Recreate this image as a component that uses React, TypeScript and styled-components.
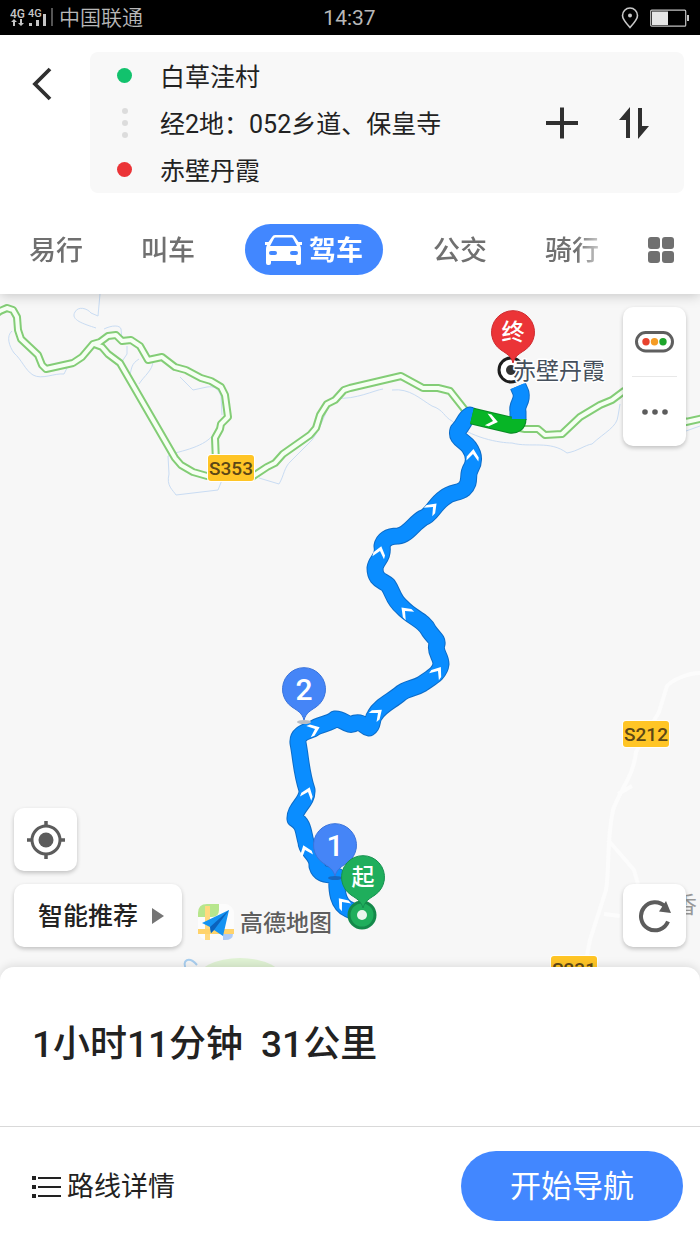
import React from 'react';
import styled, { createGlobalStyle } from 'styled-components';

const GlobalStyle = createGlobalStyle`
  *, *::before, *::after { box-sizing: border-box; }
  body {
    margin: 0;
    background: #fff;
    color: #222;
    font-family: Roboto, "Noto Sans CJK SC", sans-serif;
  }
  button {
    margin: 0;
    padding: 0;
    border: 0;
    background: none;
    color: inherit;
    font: inherit;
    cursor: pointer;
  }
  svg { display: block; }
`;

const Page = styled.div`
  display: flex;
  flex-direction: column;
  min-height: 100vh;
`;

const StatusBar = styled.div`
  display: grid;
  grid-template-columns: 1fr auto 1fr;
  align-items: center;
  height: 35px;
  padding: 0 11px 0 10px;
  background: #000;
  color: #b8b8b8;
  font-size: 21px;
  line-height: 35px;
`;

const StatusGroup = styled.div<{ $end?: boolean }>`
  display: flex;
  align-items: center;
  justify-content: ${(p) => (p.$end ? 'flex-end' : 'flex-start')};
  gap: ${(p) => (p.$end ? 11 : 6)}px;
`;

const Carrier = styled.span`
  padding-top: 1px;
  font-weight: 350;
`;

const Clock = styled.time`
  padding-top: 1px;
`;

const Header = styled.header`
  position: relative;
  z-index: 2;
  background: #fff;
  box-shadow: 0 1px 12px rgba(0, 0, 0, 0.22);
`;

const RouteBar = styled.div`
  display: flex;
  align-items: flex-start;
  padding: 17px 16px 0 0;
`;

const BackButton = styled.button`
  display: flex;
  justify-content: center;
  width: 90px;
  padding: 15px 6px 0 0;
`;

const RouteBox = styled.div`
  display: flex;
  flex: 1;
  align-items: center;
  padding: 0 34px 0 24px;
  border-radius: 8px;
  background: #f8f8f8;
`;

const StopList = styled.div`
  flex: 1;
`;

const Stop = styled.button`
  display: flex;
  align-items: center;
  gap: 25px;
  width: 100%;
  height: 47px;
  font-size: 25px;
  line-height: 43px;
  text-align: left;
`;

const StopDot = styled.span<{ $color: string }>`
  width: 15px;
  height: 15px;
  margin: 0 3px;
  border-radius: 50%;
  background: ${(p) => p.$color};
`;

const ViaDots = styled.span`
  display: flex;
  flex-direction: column;
  align-items: center;
  gap: 6px;
  width: 21px;

  i {
    width: 6px;
    height: 6px;
    border-radius: 50%;
    background: #dcdcdc;
  }
`;

const StopName = styled.span`
  flex: 1;
  padding-top: 4px;
`;

const RouteActions = styled.div`
  display: flex;
  gap: 40px;
`;

const TabRow = styled.nav`
  display: flex;
  align-items: center;
  height: 101px;
  padding: 12px 26px 0 0;
`;

const Tabs = styled.div`
  display: flex;
  flex: 1;
  align-items: center;
  justify-content: space-between;
  height: 51px;
  mask-image: linear-gradient(to right, #000 calc(100% - 52px), rgba(0, 0, 0, 0.35) calc(100% - 28px));
`;

const Tab = styled.button<{ $active?: boolean }>`
  display: flex;
  align-items: center;
  justify-content: center;
  gap: 7px;
  width: ${(p) => (p.$active ? 138 : 112)}px;
  height: 51px;
  margin: 0 ${(p) => (p.$active ? 21 : 0)}px;
  border-radius: 26px;
  background: ${(p) => (p.$active ? '#4287ff' : 'transparent')};
  color: ${(p) => (p.$active ? '#fff' : '#707070')};
  font-size: 27px;
  font-weight: ${(p) => (p.$active ? 700 : 500)};
  line-height: 47px;
`;

const TabLabel = styled.span`
  padding-top: 4px;
`;

const MoreModes = styled.button`
  margin-left: 20px;
`;

const MapArea = styled.main`
  position: relative;
  display: flex;
  flex: 1;
  justify-content: space-between;
  min-height: 600px;
  padding: 13px 14px 34px;
  background: #f7f7f7;
`;

const MapCanvas = styled.svg`
  position: absolute;
  inset: 0;
  width: 100%;
  height: 100%;
`;

const ControlColumn = styled.div<{ $split?: boolean }>`
  position: relative;
  display: flex;
  flex-direction: column;
  justify-content: ${(p) => (p.$split ? 'space-between' : 'flex-end')};
  gap: 13px;
`;

const ControlRow = styled.div`
  display: flex;
  align-items: center;
  gap: 16px;
`;

const Card = styled.div`
  border-radius: 10px;
  background: #fff;
  box-shadow: 0 2px 4px rgba(0, 0, 0, 0.22);
`;

const LayerCard = styled(Card)`
  display: flex;
  flex-direction: column;
  width: 63px;
  padding: 0 9px;
`;

const LayerButton = styled.button`
  display: flex;
  align-items: center;
  justify-content: center;
  height: 69px;

  & + & {
    height: 70px;
    border-top: 1px solid #e8e8e8;
  }
`;

const SquareButton = styled(Card).attrs({ as: 'button' })`
  display: flex;
  align-items: center;
  justify-content: center;
  width: 63px;
  height: 63px;
  background: #fff;
`;

const StrategyButton = styled(Card).attrs({ as: 'button' })`
  display: flex;
  align-items: center;
  gap: 14px;
  height: 63px;
  padding: 0 18px 0 24px;
  background: #fff;
  font-size: 25px;
  font-weight: 500;
  line-height: 61px;
`;

const StrategyLabel = styled.span`
  padding-top: 2px;
`;

const Brand = styled.div`
  display: flex;
  align-items: center;
  gap: 6px;
  padding-top: 12px;
  color: #5e5e5e;
  font-size: 23px;
  font-weight: 500;
  line-height: 32px;
  text-shadow: 0 0 2px #fff;
`;

const BrandName = styled.span`
  padding-top: 4px;
`;

const Sheet = styled.section`
  position: relative;
  z-index: 1;
  margin-top: -14px;
  border-radius: 14px 14px 0 0;
  background: #fff;
  box-shadow: 0 -2px 8px rgba(0, 0, 0, 0.1);
`;

const Summary = styled.h1`
  display: flex;
  align-items: center;
  gap: 18px;
  height: 159px;
  margin: 0;
  padding: 0 32px 4px;
  font-size: 37px;
  font-weight: 500;
  line-height: 50px;
`;

const Footer = styled.footer`
  display: flex;
  align-items: center;
  justify-content: space-between;
  height: 118px;
  padding: 0 17px 0 32px;
  border-top: 1px solid #d9d9d9;
`;

const DetailButton = styled.button`
  display: flex;
  align-items: center;
  gap: 5px;
  padding-top: 2px;
  font-size: 27px;
  line-height: 40px;
`;

const StartButton = styled.button`
  width: 222px;
  height: 70px;
  padding-top: 2px;
  border-radius: 35px;
  background: #4287ff;
  color: #fff;
  font-size: 31px;
  line-height: 68px;
`;

const GREEN_ROADS = [
  'M-4 314 L0 311 L7 308 L13 310 L17 317 L18 330 L21 339 L38 355 L42 365 L46 369 L73 363 L82 357 L93 344 L100 342 L108 336 L116 335 L122 341 L131 340 L140 346 L148 360 L162 357 L175 367 L186 370 L201 378 L211 381 L221 387 L225 395 L228 417 L221 424 L220 429 L215 438 L216 462',
  'M94 344 L102 347 L108 354 L120 363 L175 458 L181 465 L193 472 L207 476 L252 477 L267 467 L275 463 L283 454 L310 435 L316 428 L320 415 L327 404 L335 400 L344 390 L350 388 L401 376 L423 388 L438 388 L450 391 L465 410 L500 424 L525 429 L538 429 L545 435 L562 434 L580 417 L600 405 L612 400 L624 391 L650 400 L686 422 L704 418',
];

const STREAMS = [
  'M12 331 C6 336 9 346 14 353 C22 360 25 370 33 375 C42 380 54 373 64 374 L68 366',
  'M100 294 L98 316 M96 328 C84 324 70 320 75 312 C78 306 87 308 91 313 L98 316 M104 329 C112 325 120 325 121 329 L122 340 M127 346 L127 354 L121 363',
  'M139 359 C131 364 132 368 130 374 M153 361 C153 370 144 376 139 384 M180 377 L193 390 L207 387 C214 386 218 388 221 396 L222 415 M218 425 C214 442 195 448 175 453 L168 456 L169 474 C166 486 173 490 176 495 L218 490 L222 480',
  'M259 478 L279 484 C284 476 284 467 291 461 L312 440 C324 424 326 404 337 398 C355 400 375 390 383 389 M392 390 C410 388 420 399 432 406 C444 410 444 417 452 421 C470 438 500 443 512 443 C530 448 550 440 567 453 C578 451 585 445 592 444 C605 432 617 427 618 416 L620 404 M686 431 L700 426',
];

const WHITE_ROADS =
  'M700 673 C688 673 672 680 667 686 L659 712 L636 752 C634 775 620 790 613 810 C606 845 610 865 606 890 L590 940 L584 970 M632 786 L618 794 M608 840 L622 856 L634 870 L638 884 M604 914 L620 916';

const ROUTE_NORTH = 'M518 386 L521 393 C523 402 516 404 518 412 L518 420';
const ROUTE_GREEN = 'M472 416 L493 421 L510 425 Q518 426 518 419';
const ROUTE_SOUTH =
  'M470 415 C464 418 464 425 458 430 C455 439 465 441 469 447 C474 454 475 461 471 468 C466 476 472 482 464 489 C458 494 452 491 444 498 C434 505 432 515 423 518 C414 523 408 535 398 536 C388 536 383 540 382 546 C384 558 376 560 375 568 C375 580 382 580 388 585 C393 592 393 600 402 607 C412 618 424 620 429 631 C434 638 438 640 437 644 C434 652 441 656 441 664 C440 674 430 678 422 684 C414 689 406 688 400 694 C390 702 380 706 375 715 C371 720 374 725 369 728 C364 727 363 721 355 723 C348 728 343 718 335 719 C330 724 319 724 313 729 C305 732 297 734 298 743 C301 758 301 772 307 790 C308 802 294 808 295 819 C304 824 303 832 306 842 C306 852 318 854 317 866 C320 876 328 874 337 876 C336 892 338 904 348 909 L361 915';

const ARROWS: Array<[number, number, number]> = [
  [493, 421, 103],
  [473, 454, 5],
  [433, 507, 45],
  [380, 551, 15],
  [405, 611, -45],
  [438, 671, 35],
  [378, 713, 50],
  [315, 729, 68],
  [308, 792, 20],
  [305, 850, -20],
  [342, 902, -40],
];

interface PinProps {
  x: number;
  y: number;
  color: string;
  edge: string;
  label: string;
  size: number;
}

function Pin({ x, y, color, edge, label, size }: PinProps) {
  return (
    <g transform={`translate(${x} ${y})`}>
      <path
        d="M0 31 C-2 24 -6 22 -12 18 A21.5 21.5 0 1 1 12 18 C6 22 2 24 0 31 Z"
        fill={color}
        stroke={edge}
        strokeWidth="1"
      />
      <text y={size * 0.35} fontSize={size} fontWeight="500" fill="#fff" textAnchor="middle">
        {label}
      </text>
    </g>
  );
}

function Shield({ x, y, label }: { x: number; y: number; label: string }) {
  return (
    <g transform={`translate(${x} ${y})`}>
      <rect x="-24" y="-14" width="48" height="28" rx="4" fill="#fff" />
      <rect x="-23" y="-13" width="46" height="26" rx="3" fill="#ffc526" />
      <text y="7" fontSize="19" fontWeight="500" fill="#5c4716" textAnchor="middle">
        {label}
      </text>
    </g>
  );
}

interface RouteLineProps {
  d: string;
  fill: string;
  edge: string;
  cap?: 'round' | 'butt';
}

function RouteLine({ d, fill, edge, cap = 'round' }: RouteLineProps) {
  return (
    <g fill="none" strokeLinecap={cap} strokeLinejoin="round">
      <path d={d} stroke={edge} strokeWidth="17" />
      <path d={d} stroke={fill} strokeWidth="15" />
    </g>
  );
}

function RouteMap() {
  return (
    <MapCanvas viewBox="0 294 700 687" preserveAspectRatio="xMidYMid slice" role="img" aria-label="路线地图">
      <path d={WHITE_ROADS} fill="none" stroke="#fcfcfc" strokeWidth="4" />
      <g fill="none" stroke="#c9dcf3" strokeWidth="1">
        {STREAMS.map((d) => (
          <path key={d} d={d} />
        ))}
      </g>
      <ellipse cx="240" cy="980" rx="44" ry="22" fill="#e0f2d4" />
      <path d="M187 972 C180 958 190 957 197 965" fill="none" stroke="#a9cff0" strokeWidth="2" />
      <g fill="none" strokeLinejoin="round">
        {GREEN_ROADS.map((d) => (
          <path key={d} d={d} stroke="#83cd76" strokeWidth="8" />
        ))}
        {GREEN_ROADS.map((d) => (
          <path key={d} d={d} stroke="#f6fff3" strokeWidth="4" />
        ))}
      </g>
      <Shield x={231} y={468} label="S353" />
      <Shield x={646} y={734} label="S212" />
      <Shield x={574} y={969} label="S231" />
      <text x="674" y="913" fontSize="23" fill="#999">
        香
      </text>

      <circle cx="511" cy="370" r="12" fill="#fff" stroke="#1c1c1c" strokeWidth="3" />
      <circle cx="511" cy="370" r="5" fill="#333" />
      <RouteLine d={ROUTE_NORTH} fill="#0a8dff" edge="#0c6cc8" cap="butt" />
      <RouteLine d={ROUTE_SOUTH} fill="#0a8dff" edge="#0c6cc8" />
      <RouteLine d={ROUTE_GREEN} fill="#07b526" edge="#0a8a25" cap="butt" />
      <g fill="#fff">
        {ARROWS.map(([x, y, angle]) => (
          <path
            key={`${x}-${y}`}
            transform={`translate(${x} ${y}) rotate(${angle})`}
            d="M0 -5 L6 3 L6 7 L0 0 L-6 7 L-6 3 Z"
          />
        ))}
      </g>
      <text
        x="513"
        y="379"
        fontSize="23"
        fill="#46505c"
        stroke="#fff"
        strokeWidth="3"
        strokeLinejoin="round"
        paintOrder="stroke"
      >
        赤壁丹霞
      </text>
      <Pin x={513} y={332} color="#eb3437" edge="#cf2c31" label="终" size={23} />

      <ellipse cx="304" cy="722" rx="7" ry="2" fill="#b9bec6" />
      <Pin x={304} y={689} color="#4585f7" edge="#3a74dc" label="2" size={30} />
      <ellipse cx="335" cy="878" rx="7" ry="2" fill="#1768c0" />
      <Pin x={335} y={845} color="#4585f7" edge="#3a74dc" label="1" size={30} />
      <circle cx="362" cy="915" r="13" fill="#1fae5c" stroke="#14894a" strokeWidth="3" />
      <circle cx="362" cy="915" r="5" fill="#e9f5ee" />
      <Pin x={363} y={877} color="#1fae5c" edge="#169150" label="起" size={23} />
    </MapCanvas>
  );
}

function SignalIcon() {
  return (
    <svg width="43" height="20" viewBox="0 0 43 20" fill="#c6c6c6" aria-hidden="true">
      <text x="0" y="10" fontSize="12" fontWeight="500">4G</text>
      <text x="18" y="9" fontSize="11" fontWeight="500">4G</text>
      <path d="M4 11 L7 14 H5 V18 H3 V14 H1 Z M11 18 L8 15 H10 V11 H12 V15 H14 Z" />
      <path d="M19 15h3v3h-3z M26 12h3v6h-3z M33 6h3v12h-3z" />
      <path d="M41 0h2v18h-2z" fill="#555" />
    </svg>
  );
}

function LocationIcon() {
  return (
    <svg width="18" height="22" viewBox="0 0 18 22" aria-hidden="true">
      <path
        d="M9 20.5 C5 16 1.5 12.5 1.5 8.5 A7.5 7.5 0 0 1 16.5 8.5 C16.5 12.5 13 16 9 20.5 Z"
        fill="none"
        stroke="#c8c8c8"
        strokeWidth="1.6"
      />
      <circle cx="9" cy="8.5" r="2" fill="#c8c8c8" />
    </svg>
  );
}

function BatteryIcon() {
  return (
    <svg width="39" height="18" viewBox="0 0 39 18" aria-hidden="true">
      <rect x="0.7" y="1.2" width="35" height="16" rx="1" fill="none" stroke="#c4c4c4" strokeWidth="1.2" />
      <rect x="2" y="2.5" width="16" height="13.5" fill="#e6e6e6" />
      <rect x="37" y="6" width="2" height="6" fill="#c4c4c4" />
    </svg>
  );
}

function CarIcon() {
  return (
    <svg width="37" height="30" viewBox="0 0 37 30" aria-hidden="true">
      <path
        fill="#fff"
        fillRule="evenodd"
        d="M10 0 H27 Q29 0 30 2 L33.5 7 H37 V10 H35 Q36 12 36 14 V28 Q36 30 34 30 H33 Q31 30 31 28 V26 H6 V28 Q6 30 4 30 H3 Q1 30 1 28 V14 Q1 12 2 10 H0 V7 H3.500 L7 2 Q8 0 10 0 Z M10.500 2.500 Q9.500 2.500 9 3.500 L5 11 H32 L28 3.500 Q27.500 2.500 26.500 2.500 Z"
      />
      <rect x="4" y="16" width="8" height="4" rx="2" fill="#4287ff" />
      <rect x="25" y="16" width="8" height="4" rx="2" fill="#4287ff" />
    </svg>
  );
}

function TrafficIcon() {
  return (
    <svg width="39" height="22" viewBox="0 0 39 22" aria-hidden="true">
      <rect x="1.5" y="1.5" width="36" height="18.5" rx="9.2" fill="#fff" stroke="#5f5f5f" strokeWidth="3" />
      <circle cx="11" cy="10.7" r="3.7" fill="#e8432e" />
      <circle cx="19.5" cy="10.7" r="3.7" fill="#f59b23" />
      <circle cx="28" cy="10.7" r="3.7" fill="#1ea52b" />
    </svg>
  );
}

function BrandIcon() {
  return (
    <svg width="36" height="36" viewBox="0 0 36 36" aria-hidden="true">
      <rect width="36" height="36" rx="9" fill="#fcfcfc" />
      <path d="M0 13 V9 Q0 0 9 0 H21 V6 Q21 13 14 13 Z" fill="#b7e68d" />
      <path d="M7 2 H12 V36 H7 Z" fill="#ffd97f" />
      <path d="M0 25 H36 V30 H0 Z" fill="#ffd36b" />
      <path d="M25 30 H35 Q35 36 27 36 H25 Z" fill="#aecbf7" />
      <path d="M31 6 L4 19 L12 23 L13 29 L16 26 L25 32 Z" fill="#1593f2" />
      <path d="M31 6 L12 23 L13 29 L16 26 Z" fill="#0b62bd" />
    </svg>
  );
}

export default function App() {
  return (
    <Page>
      <GlobalStyle />
      <StatusBar>
        <StatusGroup>
          <SignalIcon />
          <Carrier>中国联通</Carrier>
        </StatusGroup>
        <Clock>14:37</Clock>
        <StatusGroup $end>
          <LocationIcon />
          <BatteryIcon />
        </StatusGroup>
      </StatusBar>

      <Header>
        <RouteBar>
          <BackButton aria-label="返回">
            <svg width="20" height="34" viewBox="0 0 20 34" fill="none" stroke="#303030" strokeWidth="3.8">
              <path d="M18 2 L3 17 L18 32" />
            </svg>
          </BackButton>
          <RouteBox>
            <StopList>
              <Stop>
                <StopDot $color="#12c26d" />
                <StopName>白草洼村</StopName>
              </Stop>
              <Stop>
                <ViaDots>
                  <i />
                  <i />
                  <i />
                </ViaDots>
                <StopName>经2地：052乡道、保皇寺</StopName>
              </Stop>
              <Stop>
                <StopDot $color="#eb3437" />
                <StopName>赤壁丹霞</StopName>
              </Stop>
            </StopList>
            <RouteActions>
              <button aria-label="添加途经点">
                <svg width="32" height="32" viewBox="0 0 32 32" stroke="#303030" strokeWidth="4">
                  <path d="M16 0.5 V31.5 M0 16 H32" />
                </svg>
              </button>
              <button aria-label="交换起终点">
                <svg width="32" height="32" viewBox="0 0 32 32" fill="#303030">
                  <path d="M12 0 V31 H8 V13 H1 Z M20 1 H24 V19 H31 L20 32 Z" />
                </svg>
              </button>
            </RouteActions>
          </RouteBox>
        </RouteBar>
        <TabRow>
          <Tabs>
            <Tab>
              <TabLabel>易行</TabLabel>
            </Tab>
            <Tab>
              <TabLabel>叫车</TabLabel>
            </Tab>
            <Tab $active aria-current="page">
              <CarIcon />
              <TabLabel>驾车</TabLabel>
            </Tab>
            <Tab>
              <TabLabel>公交</TabLabel>
            </Tab>
            <Tab>
              <TabLabel>骑行</TabLabel>
            </Tab>
          </Tabs>
          <MoreModes aria-label="更多出行方式">
            <svg width="26" height="26" viewBox="0 0 26 26" fill="#707070">
              <rect width="12" height="12" rx="3" />
              <rect x="14" width="12" height="12" rx="3" />
              <rect y="14" width="12" height="12" rx="3" />
              <rect x="14" y="14" width="12" height="12" rx="3" />
            </svg>
          </MoreModes>
        </TabRow>
      </Header>

      <MapArea>
        <RouteMap />
        <ControlColumn>
          <SquareButton aria-label="定位">
            <svg width="40" height="40" viewBox="0 0 40 40" fill="none" stroke="#5c5c5c">
              <circle cx="20" cy="20" r="14" strokeWidth="3" />
              <circle cx="20" cy="20" r="7.5" fill="#5c5c5c" stroke="none" />
              <path d="M20 1 V7 M20 33 V39 M1 20 H7 M33 20 H39" strokeWidth="3.5" />
            </svg>
          </SquareButton>
          <ControlRow>
            <StrategyButton>
              <StrategyLabel>智能推荐</StrategyLabel>
              <svg width="12" height="16" viewBox="0 0 12 16" fill="#757575" aria-hidden="true">
                <path d="M0 0 L12 8 L0 16 Z" />
              </svg>
            </StrategyButton>
            <Brand>
              <BrandIcon />
              <BrandName>高德地图</BrandName>
            </Brand>
          </ControlRow>
        </ControlColumn>
        <ControlColumn $split>
          <LayerCard>
            <LayerButton aria-label="路况">
              <TrafficIcon />
            </LayerButton>
            <LayerButton aria-label="更多">
              <svg width="26" height="6" viewBox="0 0 26 6" fill="#5c5c5c">
                <circle cx="3" cy="3" r="2.8" />
                <circle cx="13" cy="3" r="2.8" />
                <circle cx="23" cy="3" r="2.8" />
              </svg>
            </LayerButton>
          </LayerCard>
          <SquareButton aria-label="刷新">
            <svg width="34" height="34" viewBox="0 0 34 34">
              <path d="M30 22.5 A14 14 0 1 1 27 7.5" fill="none" stroke="#5c5c5c" strokeWidth="4" />
              <path d="M28 2 L33 14 L21 12.500 Z" fill="#5c5c5c" />
            </svg>
          </SquareButton>
        </ControlColumn>
      </MapArea>

      <Sheet>
        <Summary>
          <span>1小时11分钟</span>
          <span>31公里</span>
        </Summary>
        <Footer>
          <DetailButton>
            <svg width="30" height="24" viewBox="0 0 30 24" fill="#222" aria-hidden="true">
              <path d="M0 1h4v4H0z M0 10h4v4H0z M0 19h4v4H0z M6 2h23v2H6z M6 11h23v2H6z M6 20h23v2H6z" />
            </svg>
            路线详情
          </DetailButton>
          <StartButton>开始导航</StartButton>
        </Footer>
      </Sheet>
    </Page>
  );
}
